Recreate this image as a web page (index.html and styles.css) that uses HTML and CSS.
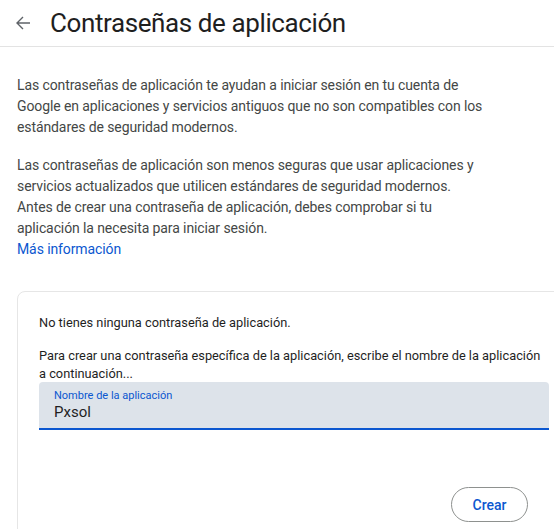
FILE: index.html
```html
<!DOCTYPE html>
<html lang="es">
  <head>
    <meta charset="UTF-8" />
    <meta name="viewport" content="width=device-width, initial-scale=1.0" />
    <title>Contraseñas de aplicación</title>
    <link rel="stylesheet" href="styles.css">
  </head>
  <body>
    <header class="top-bar">
      <button class="back-btn" aria-label="Atrás">
        <svg width="16" height="16" viewBox="0 0 16 16">
          <path d="M15 8H2.5M8 2L2 8l6 6" fill="none" stroke="#5f6368" stroke-width="1.4" />
        </svg>
      </button>
      <h1 class="page-title">Contraseñas de aplicación</h1>
    </header>

    <main class="content">
      <p class="intro">
        Las contraseñas de aplicación te ayudan a iniciar sesión en tu cuenta de
        Google en aplicaciones y servicios antiguos que no son compatibles con los
        estándares de seguridad modernos.
      </p>
      <p class="intro">
        Las contraseñas de aplicación son menos seguras que usar aplicaciones y
        servicios actualizados que utilicen estándares de seguridad modernos.
        <br />
        Antes de crear una contraseña de aplicación, debes comprobar si tu
        aplicación la necesita para iniciar sesión.
        <br />
        <a class="more-link" href="#">Más información</a>
      </p>

      <section class="card">
        <p class="card-text">No tienes ninguna contraseña de aplicación.</p>
        <p class="card-text">
          Para crear una contraseña específica de la aplicación, escribe el nombre de la aplicación
          a continuación...
        </p>
        <label class="field">
          <span class="field-label">Nombre de la aplicación</span>
          <input class="field-input" type="text" value="Pxsol" />
        </label>
        <div class="actions">
          <button class="create-btn">Crear</button>
        </div>
      </section>
    </main>
  </body>
</html>
```

FILE: styles.css
```css
body {
  font-family: Roboto, "Noto Sans", Arial, sans-serif;
  margin: 0;
  padding: 0;
  background-color: #fff;
  color: #202124;
  overflow: hidden;
  height: 529px;
}
.top-bar {
  display: flex;
  align-items: center;
  height: 46px;
  border-bottom: 1px solid #e3e3e3;
}
.back-btn {
  background: none;
  border: none;
  padding: 0;
  margin-left: 15px;
  margin-right: 19px;
  width: 16px;
  height: 16px;
  display: flex;
}
.page-title {
  margin: 0;
  font-size: 26px;
  font-weight: 400;
  color: #1f1f1f;
  letter-spacing: -0.4px;
}
.content {
  padding: 0 17px;
}
.intro {
  width: 470px;
  margin: 17px 0 0;
  font-size: 14px;
  line-height: 21px;
  letter-spacing: -0.1px;
  color: #444746;
}
.intro:first-child {
  margin-top: 28px;
}
.more-link {
  color: #0b57d0;
  text-decoration: none;
}
.card {
  margin-top: 31px;
  width: 510px;
  padding: 22px 21px 40px;
  border: 1px solid #e6e6e6;
  border-radius: 8px;
}
.card-text {
  margin: 0 0 15px;
  font-size: 12.8px;
  line-height: 18px;
  color: #1f1f1f;
}
.card-text + .card-text {
  margin-bottom: 0;
}
.field {
  display: flex;
  flex-direction: column;
  height: 46px;
  margin-top: -1px;
  padding: 0 15px;
  background-color: #dde3ea;
  border-radius: 4px 4px 0 0;
  border-bottom: 2px solid #0b57d0;
}
.field-label {
  margin-top: 7px;
  font-size: 11px;
  color: #0b57d0;
}
.field-input {
  border: none;
  background: transparent;
  padding: 0;
  margin-top: 1px;
  font-family: inherit;
  font-size: 15px;
  color: #1f1f1f;
  outline: none;
}
.actions {
  display: flex;
  justify-content: flex-end;
  margin-top: 57px;
  padding-right: 21px;
}
.create-btn {
  width: 77px;
  height: 35px;
  border: 1px solid #8e918f;
  border-radius: 18px;
  background: #fff;
  color: #0b57d0;
  font-family: inherit;
  font-size: 14px;
  font-weight: 500;
}
```
